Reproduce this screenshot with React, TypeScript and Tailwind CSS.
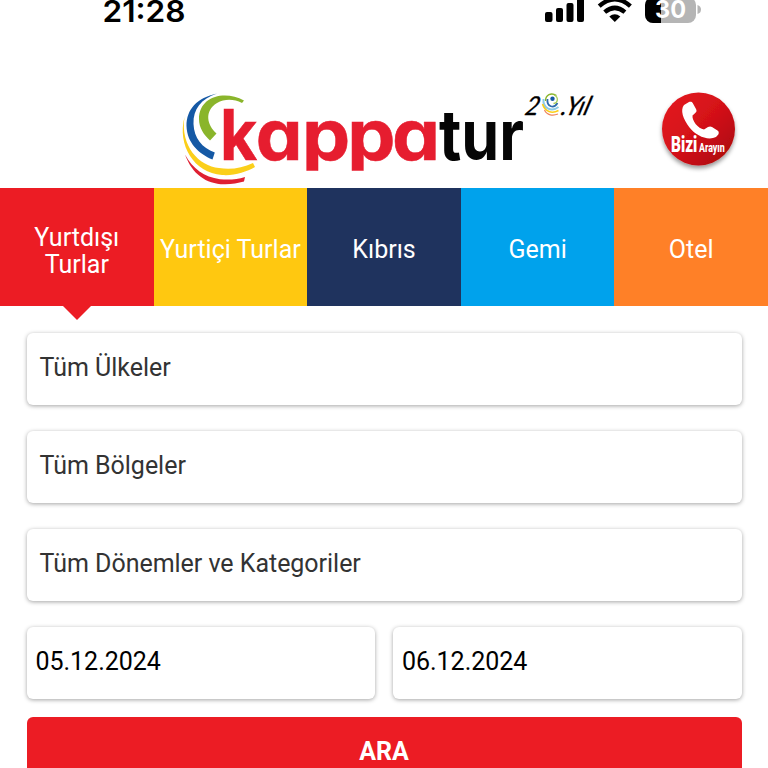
const tabs = [
  { label: 'Yurtdışı Turlar', color: 'bg-[#ec1c24]', active: true },
  { label: 'Yurtiçi Turlar', color: 'bg-[#ffc810]' },
  { label: 'Kıbrıs', color: 'bg-[#1f335e]' },
  { label: 'Gemi', color: 'bg-[#00a2ec]' },
  { label: 'Otel', color: 'bg-[#ff8027]' },
];

// Letters of the red half of the wordmark: glyph, left edge, advance.
const wordmark: [string, number, number][] = [
  ['k', 220, 37.2],
  ['a', 255.8, 46.8],
  ['p', 302, 48.3],
  ['p', 347.200, 48.3],
  ['a', 392, 48],
];

function StatusBar() {
  return (
    <svg width="768" height="40" className="block" fontFamily="Inter, sans-serif">
      <text x="102.5" y="21.5" fontSize="30" fontWeight="600" textLength="83" lengthAdjust="spacingAndGlyphs">21:28</text>
      <rect x="545" y="12" width="7.5" height="10" rx="2" />
      <rect x="556" y="8" width="7" height="14" rx="2" />
      <rect x="566.5" y="3" width="7" height="19" rx="2" />
      <rect x="577" y="-4" width="7" height="26" rx="2" />
      <g fill="none" stroke="#000" strokeWidth="4.4">
        <path d="M599.2 6.2 Q614.8 -7.6 630.4 6.2" />
        <path d="M604.7 12.2 Q614.8 3.500 624.9 12.2" />
      </g>
      <path d="M609.3 16.6 Q614.8 11.7 620.3 16.6 L614.8 22Z" />
      <clipPath id="charge"><rect x="645" y="-5" width="16" height="30" /></clipPath>
      <rect x="645" y="-3" width="51" height="26" rx="8" fill="#b5b5b5" />
      <rect x="645" y="-3" width="51" height="26" rx="8" clipPath="url(#charge)" />
      <path d="M697.5 5 Q701 6 701 9.5 Q701 13 697.5 14Z" fill="#b5b5b5" />
      <text x="655" y="18.3" fontSize="24" fontWeight="700" fill="#fff" textLength="31" lengthAdjust="spacingAndGlyphs">30</text>
    </svg>
  );
}

function Logo() {
  return (
    <svg width="430" height="100" viewBox="176 88 430 100" className="block" fontFamily="Inter, sans-serif">
      <path fill="#8ab52b" d="M244 100.5C225 90 199 96 199 119C199 128 204 135 210 140.5L216.5 133.5C207 125 204 111 217 103C225 98.5 234 99 242 103Z" />
      <path fill="#1559a5" d="M217 93.500C197 98 186.500 109 186.500 126C187 143 199 154 212.500 159.500L214.800 152.500C202 148 194 138 193.500 124C193 109 201 99 217 93.500Z" />
      <path fill="#fbcf1a" d="M184.500 117C177 145 194 173 222 175C234 176 246 172 255 167L253 163C242 168 231 170 219 168C199 166 180 146 184.500 117Z" />
      <path fill="#df2032" d="M185 154.500C192 174 206 184 224 184.300C231 184.500 238 183 244 181.500L245 177C237 179.500 229 180 220 179.200C204 177 193 169 185 154.500Z" />
      <clipPath id="wordClip"><rect x="216" y="100" width="320" height="70.700" /></clipPath>
      <g fontSize="70" fontWeight="700" style={{ fontFeatureSettings: '"cv11"' }} clipPath="url(#wordClip)">
        {wordmark.map(([glyph, x, advance]) => (
          <text key={x} x={x} y="159.500" fill="#e61d2f" stroke="#e61d2f" strokeWidth=".5" textLength={advance} lengthAdjust="spacingAndGlyphs">{glyph}</text>
        ))}
        <text x="439" y="159.500" fill="#050505" textLength="85" lengthAdjust="spacingAndGlyphs">tur</text>
      </g>
      <g fontFamily="Lato, sans-serif" fontStyle="italic" fontSize="26" fontWeight="400" stroke="#000" strokeWidth=".3">
        <text transform="translate(524 114.500) skewX(-13)" textLength="14" lengthAdjust="spacingAndGlyphs">2</text>
        <text transform="translate(560 114.500) skewX(-17)" textLength="28" lengthAdjust="spacingAndGlyphs">.Yıl</text>
      </g>
      <g fill="none">
        <path d="M556.500 95.500C551 92 545.500 95 545.500 101" stroke="#8ab52b" strokeWidth="1.4" />
        <path d="M543.500 99C542.500 109 552 112 558.500 107" stroke="#8dcbe5" strokeWidth="2" />
        <path d="M542.500 104C545 112 552 114 558.500 110.500" stroke="#fbcf1a" strokeWidth="1.6" />
        <path d="M544.500 110C547 115.500 553 116 558 114" stroke="#ef845b" strokeWidth="1.2" />
        <path d="M547.500 99C546.500 107 554 109 557.500 103" stroke="#2c6cad" strokeWidth="1.8" />
        <path d="M554 95C559 97 558 103 553.500 103.500" stroke="#a5cc57" strokeWidth="1.3" />
      </g>
      <circle cx="552.500" cy="98.700" r="2.200" fill="#1559a5" />
    </svg>
  );
}

function CallButton() {
  return (
    <svg width="90" height="90" viewBox="653 84 90 90" className="block" fontFamily="Roboto, sans-serif" role="button">
      <defs>
        <linearGradient id="callFill" x1="0" y1="0" x2="1" y2="1">
          <stop offset="0" stopColor="#e51b23" />
          <stop offset=".5" stopColor="#d41118" />
          <stop offset="1" stopColor="#a5080d" />
        </linearGradient>
        <filter id="callShadow" x="-20%" y="-20%" width="140%" height="150%">
          <feDropShadow dx="0" dy="3" stdDeviation="2" floodOpacity=".4" />
        </filter>
      </defs>
      <circle cx="698.500" cy="129" r="36.500" fill="url(#callFill)" filter="url(#callShadow)" />
      <path fill="#fff" d="M684 105L689 102C690.500 101.300 692 101.700 692.700 103L696 109C697 111 696.500 112 695 113.200L692.500 115.500C692 121 698 128.500 704 129.500L708 127C709.500 126.200 710.700 126.200 712 127L717.500 130.500C719 131.500 719 133 718.300 134.500L716 137C708 141 696 136 689.500 127.500C683 119 680 110 684 105Z" />
      <g fill="#fff">
        <text transform="translate(671 152.300) scale(.7 1)" fontSize="22" fontWeight="900">Bizi</text>
        <text transform="translate(699 151.800) scale(.74 1)" fontSize="12" fontWeight="800">Arayın</text>
      </g>
    </svg>
  );
}

function Field({ value, date = false }: { value: string; date?: boolean }) {
  return (
    <div className={`flex h-[72px] flex-1 items-center rounded-md bg-white pb-[2px] text-[25px] tracking-[-0.03px] shadow-[0_1px_4px_rgba(0,0,0,0.36)] ${date ? 'pl-[9px] text-black' : 'pl-[13px] text-[#333]'}`}>
      {value}
    </div>
  );
}

export default function App() {
  return (
    <main className="h-[768px] w-[768px] overflow-hidden bg-white font-['Roboto',sans-serif]">
      <StatusBar />
      <header className="flex h-[148.400px] items-start pl-[176px] pt-[44px]">
        <div className="pt-1"><Logo /></div>
        <div className="ml-[47px]"><CallButton /></div>
      </header>
      <nav className="grid h-[117.600px] grid-cols-5">
        {tabs.map((tab) => (
          <div key={tab.label} className={`relative flex items-center justify-center text-center text-[25px] leading-[27px] text-white ${tab.active ? 'pt-[7px]' : 'pt-[5px]'} ${tab.color}`}>
            <span className={tab.active ? 'w-[100px]' : 'whitespace-nowrap'}>{tab.label}</span>
            {tab.active && <i className="absolute left-1/2 top-full size-0 -translate-x-1/2 border-x-[14px] border-t-[14px] border-x-transparent border-t-[#ec1c24]" />}
          </div>
        ))}
      </nav>
      <form className="flex flex-col gap-[26.100px] px-[26.500px] pt-[26.600px]">
        <div className="flex"><Field value="Tüm Ülkeler" /></div>
        <div className="flex"><Field value="Tüm Bölgeler" /></div>
        <div className="flex"><Field value="Tüm Dönemler ve Kategoriler" /></div>
        <div className="flex gap-[18px]">
          <Field value="05.12.2024" date />
          <Field value="06.12.2024" date />
        </div>
        <button type="button" className="-mt-2 h-[72px] rounded-md bg-[#ec1c24] pb-[2px] text-[25px] font-bold text-white">ARA</button>
      </form>
    </main>
  );
}
